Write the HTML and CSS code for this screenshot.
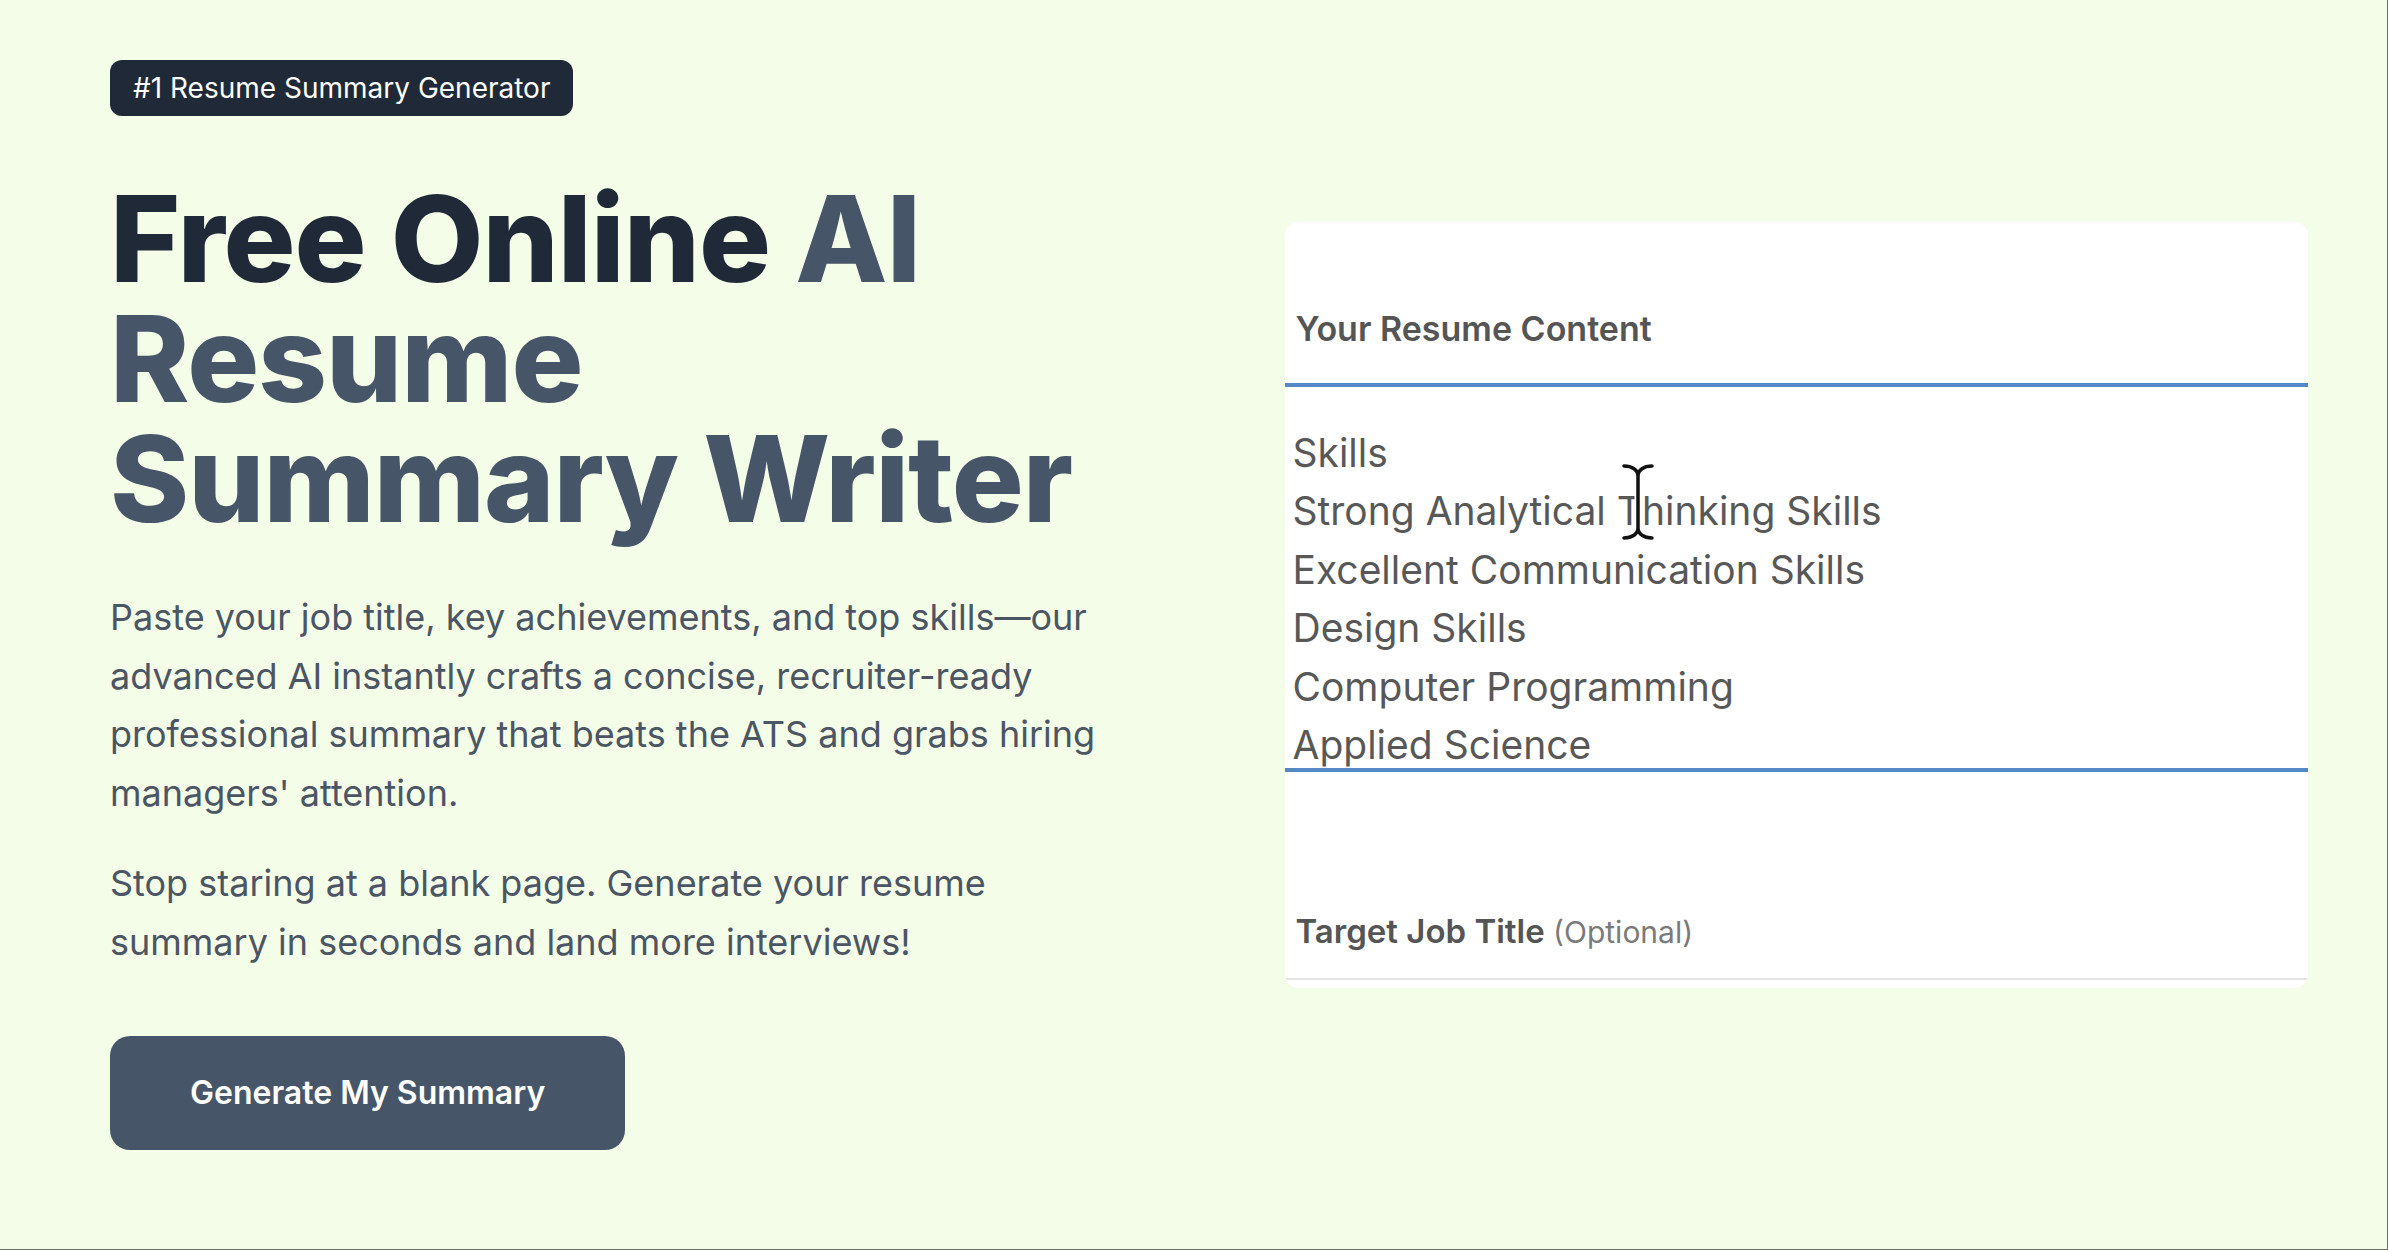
FILE: index.html
```html
<!DOCTYPE html>
<html lang="en">
<head>
    <meta charset="UTF-8">
    <meta name="viewport" content="width=device-width, initial-scale=1.0">
    <title>Free Online AI Resume Summary Writer</title>
    <link rel="stylesheet" href="styles.css">
</head>
<body>
    <div class="page">
        <div class="hero-text">
            <span class="badge">#1 Resume Summary Generator</span>

            <h1 class="title">Free Online <span class="title-accent">AI Resume Summary Writer</span></h1>

            <p class="lead">Paste your job title, key achievements, and top skills—our advanced AI instantly crafts a concise, recruiter-ready professional summary that beats the ATS and grabs hiring managers' attention.</p>
            <p class="lead">Stop staring at a blank page. Generate your resume summary in seconds and land more interviews!</p>

            <button class="cta">Generate My Summary</button>
        </div>

        <div class="preview">
            <div class="preview-card">
                <div class="field-label">Your Resume Content</div>
                <div class="resume-box">
                    <div>Skills</div>
                    <div>Strong Analytical Thinking Skills</div>
                    <div>Excellent Communication Skills</div>
                    <div>Design Skills</div>
                    <div>Computer Programming</div>
                    <div>Applied Science</div>
                </div>
                <div class="field-label job-label">Target Job Title <span class="optional">(Optional)</span></div>
                <div class="job-input"></div>

                <svg class="text-cursor" width="34" height="78" viewBox="0 0 34 78">
                    <path d="M3 3 C11 3 17 7 17 13 C17 7 23 3 31 3 M17 13 L17 65 M3 75 C11 75 17 71 17 65 C17 71 23 75 31 75" fill="none" stroke="#fff" stroke-width="7" stroke-linecap="round"/>
                    <path d="M3 3 C11 3 17 7 17 13 C17 7 23 3 31 3 M17 13 L17 65 M3 75 C11 75 17 71 17 65 C17 71 23 75 31 75" fill="none" stroke="#111" stroke-width="3.5" stroke-linecap="round"/>
                </svg>
            </div>
        </div>
    </div>
</body>
</html>
```

FILE: styles.css
```css
* {
    margin: 0;
    padding: 0;
    box-sizing: border-box;
}

body {
    background: #f4fde8;
    color: #1f2937;
    font-family: Inter, "Noto Sans", sans-serif;
}

.page {
    height: 1250px;
    padding: 60px 79px 0 110px;
    display: grid;
    grid-template-columns: 1fr 1fr;
    column-gap: 151px;
    align-items: start;
    border-right: 1px solid #6b6e66;
    border-bottom: 1px solid #6b6e66;
}

/* left column */
.hero-text {
    display: flex;
    flex-direction: column;
    align-items: flex-start;
}

.badge {
    display: inline-block;
    background: #1f2937;
    color: #fff;
    font-size: 28px;
    line-height: 40px;
    padding: 8px 23px;
    border-radius: 12px;
}

.title {
    margin-top: 63px;
    font-size: 120px;
    line-height: 120px;
    font-weight: 800;
    letter-spacing: -1px;
    color: #1f2937;
}

.title-accent {
    color: #475569;
}

.lead {
    font-size: 36px;
    line-height: 58.5px;
    color: #4b5563;
}

.title + .lead {
    margin-top: 49px;
}

.lead + .lead {
    margin-top: 32px;
}

.cta {
    margin-top: 65px;
    padding: 33px 80px;
    background: #475569;
    color: #fff;
    border: none;
    border-radius: 20px;
    font-family: inherit;
    font-size: 32px;
    line-height: 48px;
    font-weight: 600;
    cursor: pointer;
}

/* right column: form preview */
.preview {
    padding-top: 161px;
}

.preview-card {
    position: relative;
    height: 767px;
    background: #fff;
    border-radius: 14px;
    padding-top: 88px;
    color: #555;
    overflow: hidden;
    box-shadow: inset 0 3px 3px -2px rgba(0, 0, 0, 0.04);
}

.field-label {
    padding-left: 11px;
    font-size: 34px;
    line-height: 40px;
    font-weight: 600;
    color: #555;
}

.resume-box {
    margin-top: 34px;
    height: 389px;
    padding: 37px 0 0 8px;
    border-top: 4px solid #5688c8;
    border-bottom: 4px solid #5688c8;
    font-size: 39px;
    line-height: 58.4px;
    color: #585858;
    overflow: hidden;
}

.job-label {
    margin-top: 139px;
    font-size: 33px;
}

.optional {
    font-size: 30px;
    font-weight: 400;
    color: #7a7a7a;
}

.job-input {
    margin-top: 26px;
    border-top: 2px solid #e4e4e4;
}

.text-cursor {
    position: absolute;
    left: 336px;
    top: 242px;
}
```
